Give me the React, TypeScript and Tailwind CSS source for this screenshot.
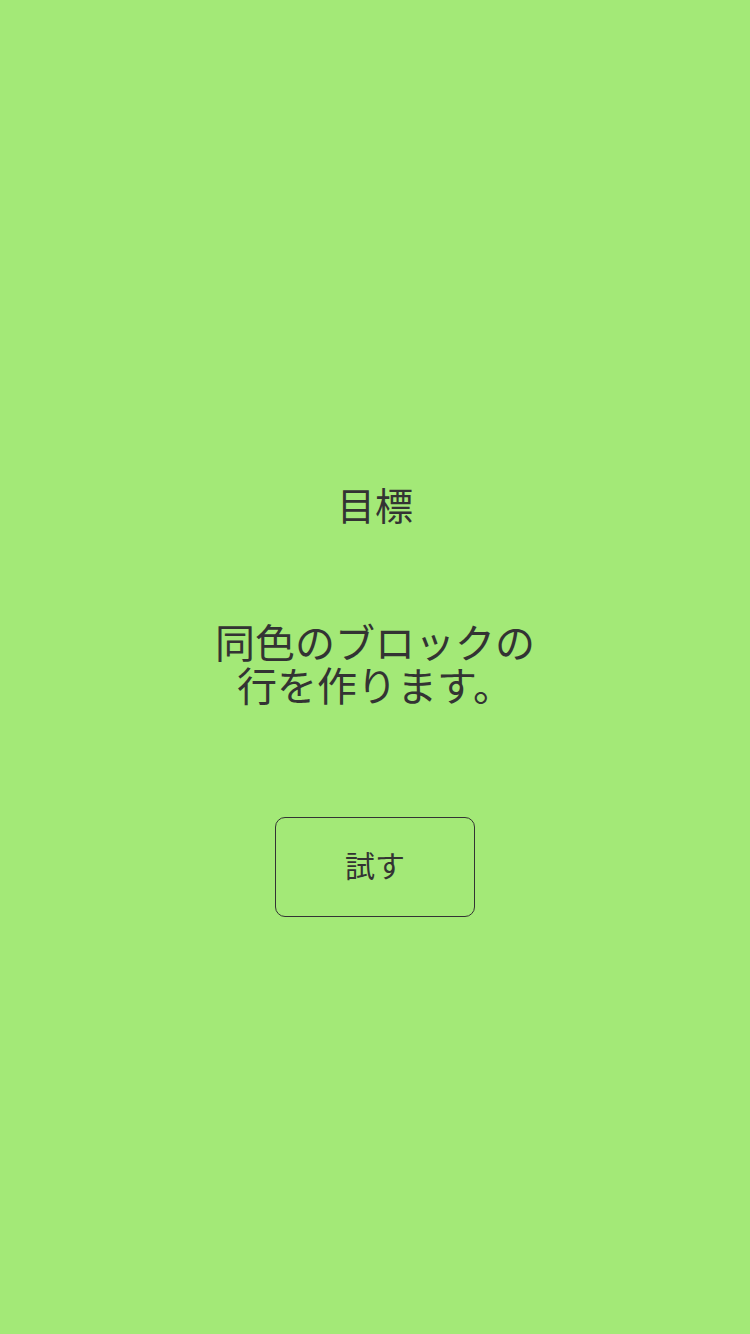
export default function App() {
  return (
    <div
      className="w-[750px] h-[1334px] bg-[#a3e977] flex flex-col items-center text-[#333333]"
      style={{ fontFamily: '"Noto Sans CJK JP", "Noto Sans", sans-serif' }}
    >
      <div className="mt-[481px] h-[46px] leading-[46px] text-[38px]">目標</div>
      <div className="mt-[93px] text-[40px] leading-[43px] text-center">
        <div>同色のブロックの</div>
        <div>行を作ります。</div>
      </div>
      <button className="mt-[111px] w-[200px] h-[100px] border border-[#333333] rounded-[10px] text-[30px] flex items-center justify-center pb-[5px]">
        試す
      </button>
    </div>
  );
}
